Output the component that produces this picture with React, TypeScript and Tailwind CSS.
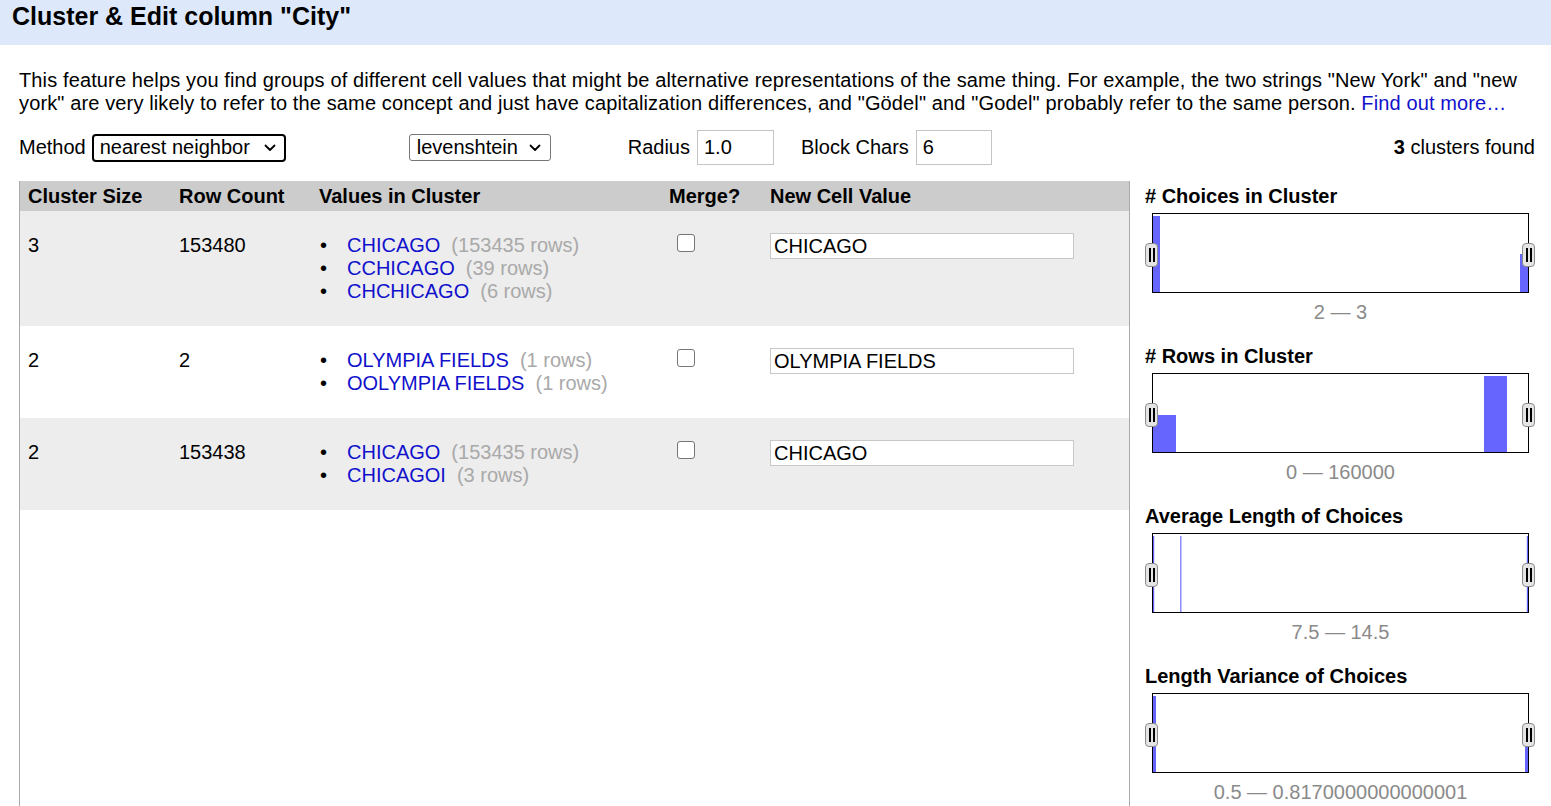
import React from "react";

const clusters = [
  {
    size: 3,
    rows: "153480",
    values: [
      ["CHICAGO", "153435"],
      ["CCHICAGO", "39"],
      ["CHCHICAGO", "6"],
    ],
    newValue: "CHICAGO",
    shaded: true,
  },
  {
    size: 2,
    rows: "2",
    values: [
      ["OLYMPIA FIELDS", "1"],
      ["OOLYMPIA FIELDS", "1"],
    ],
    newValue: "OLYMPIA FIELDS",
    shaded: false,
  },
  {
    size: 2,
    rows: "153438",
    values: [
      ["CHICAGO", "153435"],
      ["CHICAGOI", "3"],
    ],
    newValue: "CHICAGO",
    shaded: true,
  },
];

// bars are in the 375x78 inner box of each histogram
const facets = [
  {
    title: "# Choices in Cluster",
    range: "2 — 3",
    bars: [
      { x: 0, w: 7, y: 2, h: 76, o: 1 },
      { x: 367, w: 8, y: 40, h: 38, o: 1 },
    ],
  },
  {
    title: "# Rows in Cluster",
    range: "0 — 160000",
    bars: [
      { x: 0, w: 23, y: 41, h: 37, o: 1 },
      { x: 331, w: 23, y: 2, h: 76, o: 1 },
    ],
  },
  {
    title: "Average Length of Choices",
    range: "7.5 — 14.5",
    bars: [
      { x: 0, w: 1.2, y: 2, h: 76, o: 1 },
      { x: 27, w: 1.5, y: 2, h: 76, o: 0.75 },
      { x: 373.8, w: 1.2, y: 2, h: 76, o: 1 },
    ],
  },
  {
    title: "Length Variance of Choices",
    range: "0.5 — 0.8170000000000001",
    bars: [
      { x: 0, w: 3, y: 2, h: 76, o: 1 },
      { x: 372, w: 3, y: 36, h: 42, o: 1 },
    ],
  },
];

function Chevron() {
  return (
    <svg width="12" height="8" viewBox="0 0 12 8" className="shrink-0">
      <path d="M1.5 1.5 L6 6 L10.5 1.5" fill="none" stroke="#000" strokeWidth="1.8" strokeLinecap="round" strokeLinejoin="round" />
    </svg>
  );
}

function Handle({ side }: { side: "left" | "right" }) {
  return (
    <div
      className={
        side === "left"
          ? "absolute left-[-8px] top-[29px] w-[13px] h-[24px] rounded-[4px] border border-[#8c8c8c] bg-[#e4e4e4] flex items-center justify-center gap-[2px]"
          : "absolute right-[-7px] top-[29px] w-[13px] h-[24px] rounded-[4px] border border-[#8c8c8c] bg-[#e4e4e4] flex items-center justify-center gap-[2px]"
      }
    >
      <div className="w-[2px] h-[14px] bg-black" />
      <div className="w-[2px] h-[14px] bg-black" />
    </div>
  );
}

export default function App() {
  return (
    <div className="w-[1551px] h-[806px] overflow-hidden bg-white text-black text-[20px] leading-[23px] font-['Liberation_Sans',Arial,sans-serif]">
      {/* Title bar */}
      <div className="h-[45px] bg-[#dde9fb] pl-[12px] pt-[2px]">
        <h1 className="text-[25px] leading-[29px] font-bold">Cluster &amp; Edit column "City"</h1>
      </div>

      {/* Description */}
      <p className="mt-[24px] ml-[19px] mr-[16px] tracking-[0.13px]">
        This feature helps you find groups of different cell values that might be alternative representations of the
        same thing. For example, the two strings "New York" and "new york" are very likely to refer to the same concept
        and just have capitalization differences, and "Gödel" and "Godel" probably refer to the same person.{" "}
        <span className="text-[#1111cc]">Find out more…</span>
      </p>

      {/* Controls */}
      <div className="mt-[15px] ml-[19px] mr-[16px] h-[35px] flex items-center">
        <span>Method</span>
        <div className="ml-[6px] w-[194px] h-[28px] border-2 border-black rounded-[4px] flex items-center justify-between pl-[6px] pr-[8px]">
          <span>nearest neighbor</span>
          <Chevron />
        </div>
        <div className="ml-[123px] w-[142px] h-[27px] border border-[#767676] rounded-[3px] flex items-center justify-between pl-[7px] pr-[9px]">
          <span>levenshtein</span>
          <Chevron />
        </div>
        <span className="ml-[77px]">Radius</span>
        <div className="ml-[7px] w-[77px] h-[35px] border border-[#c4c4c4] flex items-center pl-[6px]">1.0</div>
        <span className="ml-[27px]">Block Chars</span>
        <div className="ml-[7px] w-[76px] h-[35px] border border-[#c4c4c4] flex items-center pl-[6px]">6</div>
        <div className="flex-1" />
        <span>
          <b>3</b> clusters found
        </span>
      </div>

      {/* Body */}
      <div className="mt-[16px] ml-[19px] flex">
        {/* Cluster table */}
        <div className="w-[1111px] h-[640px] border-l border-r border-[#a9a9a9]">
          <div className="h-[30px] bg-[#cccccc] grid grid-cols-[151px_140px_350px_101px_366px] items-center font-bold">
            <div className="pl-[8px]">Cluster Size</div>
            <div className="pl-[8px]">Row Count</div>
            <div className="pl-[8px]">Values in Cluster</div>
            <div className="pl-[8px]">Merge?</div>
            <div className="pl-[8px]">New Cell Value</div>
          </div>
          {clusters.map((c, i) => (
            <div
              key={i}
              className={
                c.shaded
                  ? "bg-[#ededed] grid grid-cols-[151px_140px_350px_101px_366px] pt-[23px] pb-[23px]"
                  : "bg-white grid grid-cols-[151px_140px_350px_101px_366px] pt-[23px] pb-[23px]"
              }
            >
              <div className="pl-[8px]">{c.size}</div>
              <div className="pl-[8px]">{c.rows}</div>
              <ul className="pl-[8px]">
                {c.values.map(([v, n]) => (
                  <li key={v} className="flex">
                    <span className="w-[28px] pl-[1px]">•</span>
                    <span className="text-[#1111cc]">{v}</span>
                    <span className="ml-[11px] text-[#a9a9a9]">({n} rows)</span>
                  </li>
                ))}
              </ul>
              <div className="pl-[16px]">
                <div className="w-[18px] h-[18px] rounded-[3px] border border-[#767676] bg-white" />
              </div>
              <div className="pl-[8px] -mt-[1px]">
                <div className="w-[304px] h-[26px] border border-[#c8c8c8] bg-white flex items-center pl-[3px]">
                  {c.newValue}
                </div>
              </div>
            </div>
          ))}
        </div>

        {/* Facets */}
        <div className="w-[421px] pt-[4px]">
          {facets.map((f) => (
            <div key={f.title} className="h-[160px]">
              <div className="pl-[15px] h-[23px] font-bold">{f.title}</div>
              <div className="ml-[22px] mt-[5px] w-[377px] h-[80px] border border-black relative bg-white">
                <svg width="375" height="78" viewBox="0 0 375 78" className="block">
                  {f.bars.map((b, j) => (
                    <rect key={j} x={b.x} y={b.y} width={b.w} height={b.h} fill="#6666ff" opacity={b.o} />
                  ))}
                </svg>
                <Handle side="left" />
                <Handle side="right" />
              </div>
              <div className="ml-[22px] w-[377px] mt-[8px] text-center text-[#8a8a8a]">{f.range}</div>
            </div>
          ))}
        </div>
      </div>
    </div>
  );
}
